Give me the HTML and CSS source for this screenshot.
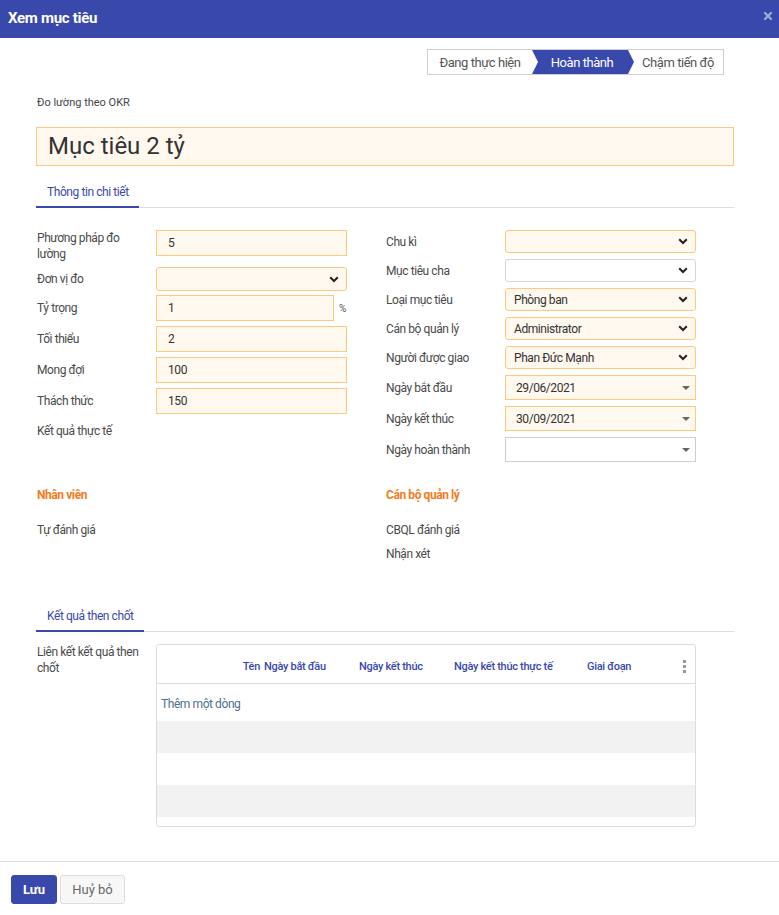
FILE: index.html
```html
<!DOCTYPE html>
<html lang="vi">
<head>
<meta charset="utf-8">
<title>Xem mục tiêu</title>
<link rel="stylesheet" href="styles.css">
</head>
<body>
<div class="modal">
  <header class="mhead">
    <h4 class="mtitle">Xem mục tiêu</h4>
    <span class="close"><svg width="8" height="8" viewBox="0 0 8 8"><path d="M1 1L7 7M7 1L1 7" stroke="#a3aad8" stroke-width="2.2" stroke-linecap="square"/></svg></span>
  </header>
  <main class="mbody">
    <div class="statusrow">
      <div class="statusbar">
        <span class="st st1">Đang thực hiện</span>
        <span class="st st2 active">Hoàn thành</span>
        <span class="st st3">Chậm tiến độ</span>
      </div>
    </div>
    <div class="okr">Đo lường theo OKR</div>
    <div class="titlebox">Mục tiêu 2 tỷ</div>
    <nav class="tabs"><span class="tab">Thông tin chi tiết</span></nav>

    <div class="cols">
      <div class="col left">
        <div class="row top"><div class="lbl">Phương pháp đo lường</div><div class="fld"><div class="inp">5</div></div></div>
        <div class="row r-sel"><div class="lbl">Đơn vị đo</div><div class="fld"><div class="sel req"><span></span><svg class="chev" width="10" height="7" viewBox="0 0 10 7"><path d="M1.2 1.2L5 5L8.8 1.2" fill="none" stroke="#222" stroke-width="2"/></svg></div></div></div>
        <div class="row"><div class="lbl">Tỷ trọng</div><div class="fld pct"><div class="inp">1</div><span class="unit">%</span></div></div>
        <div class="row"><div class="lbl">Tối thiểu</div><div class="fld"><div class="inp">2</div></div></div>
        <div class="row"><div class="lbl">Mong đợi</div><div class="fld"><div class="inp">100</div></div></div>
        <div class="row"><div class="lbl">Thách thức</div><div class="fld"><div class="inp">150</div></div></div>
        <div class="row r-text"><div class="lbl">Kết quả thực tế</div><div class="fld"></div></div>
      </div>
      <div class="col right">
        <div class="row rs"><div class="lbl">Chu kì</div><div class="fld"><div class="sel req"><span></span><svg class="chev" width="10" height="7" viewBox="0 0 10 7"><path d="M1.2 1.2L5 5L8.8 1.2" fill="none" stroke="#222" stroke-width="2"/></svg></div></div></div>
        <div class="row rs"><div class="lbl">Mục tiêu cha</div><div class="fld"><div class="sel"><span></span><svg class="chev" width="10" height="7" viewBox="0 0 10 7"><path d="M1.2 1.2L5 5L8.8 1.2" fill="none" stroke="#222" stroke-width="2"/></svg></div></div></div>
        <div class="row rs"><div class="lbl">Loại mục tiêu</div><div class="fld"><div class="sel req"><span>Phòng ban</span><svg class="chev" width="10" height="7" viewBox="0 0 10 7"><path d="M1.2 1.2L5 5L8.8 1.2" fill="none" stroke="#222" stroke-width="2"/></svg></div></div></div>
        <div class="row rs"><div class="lbl">Cán bộ quản lý</div><div class="fld"><div class="sel req"><span>Administrator</span><svg class="chev" width="10" height="7" viewBox="0 0 10 7"><path d="M1.2 1.2L5 5L8.8 1.2" fill="none" stroke="#222" stroke-width="2"/></svg></div></div></div>
        <div class="row rs"><div class="lbl">Người được giao</div><div class="fld"><div class="sel req"><span>Phan Đức Mạnh</span><svg class="chev" width="10" height="7" viewBox="0 0 10 7"><path d="M1.2 1.2L5 5L8.8 1.2" fill="none" stroke="#222" stroke-width="2"/></svg></div></div></div>
        <div class="row rd"><div class="lbl">Ngày bắt đầu</div><div class="fld"><div class="date req"><span>29/06/2021</span><svg class="caret" width="8" height="4" viewBox="0 0 8 4"><path d="M0 0H8L4 4Z" fill="#666"/></svg></div></div></div>
        <div class="row rd"><div class="lbl">Ngày kết thúc</div><div class="fld"><div class="date req"><span>30/09/2021</span><svg class="caret" width="8" height="4" viewBox="0 0 8 4"><path d="M0 0H8L4 4Z" fill="#666"/></svg></div></div></div>
        <div class="row rd"><div class="lbl">Ngày hoàn thành</div><div class="fld"><div class="date"><span></span><svg class="caret" width="8" height="4" viewBox="0 0 8 4"><path d="M0 0H8L4 4Z" fill="#666"/></svg></div></div></div>
      </div>
    </div>

    <div class="cols eval">
      <div class="col">
        <div class="sect">Nhân viên</div>
        <div class="plain">Tự đánh giá</div>
      </div>
      <div class="col">
        <div class="sect">Cán bộ quản lý</div>
        <div class="plain">CBQL đánh giá</div>
        <div class="plain">Nhận xét</div>
      </div>
    </div>

    <nav class="tabs tabs2"><span class="tab">Kết quả then chốt</span></nav>

    <div class="krow">
      <div class="lbl">Liên kết kết quả then chốt</div>
      <div class="tbl">
        <div class="thead">
          <span class="th th-name">Tên</span>
          <span class="th">Ngày bắt đầu</span>
          <span class="th">Ngày kết thúc</span>
          <span class="th">Ngày kết thúc thực tế</span>
          <span class="th">Giai đoạn</span>
          <span class="th th-opt"><svg width="3" height="13" viewBox="0 0 3 13"><rect x="0" y="0" width="3" height="3" fill="#999"/><rect x="0" y="5" width="3" height="3" fill="#999"/><rect x="0" y="10" width="3" height="3" fill="#999"/></svg></span>
        </div>
        <div class="addrow">Thêm một dòng</div>
        <div class="trow grey"></div>
        <div class="trow"></div>
        <div class="trow grey"></div>
        <div class="tend"></div>
      </div>
    </div>
  </main>
  <footer class="mfoot">
    <button class="btn primary">Lưu</button>
    <button class="btn secondary">Huỷ bỏ</button>
  </footer>
</div>
</body>
</html>
```

FILE: styles.css
```css
* { box-sizing: border-box; }
html, body { margin: 0; padding: 0; background: #fff; }
body {
  font-family: Roboto, "Noto Sans", "Liberation Sans", sans-serif;
  font-size: 12px;
  letter-spacing: -0.42px;
  color: #4a4a4a;
}
.modal { width: 779px; }

.mhead {
  height: 38px;
  background: #3949ab;
  display: flex;
  align-items: center;
  justify-content: space-between;
  padding: 0 8px 2px 8px;
}
.mtitle {
  margin: 0;
  font-size: 15px;
  font-weight: 700;
  color: #fff;
  letter-spacing: -0.3px;
}
.close { display: flex; margin-right: -1px; margin-top: -4px; }

.mbody { padding: 0 45px 0 36px; }

.statusrow {
  display: flex;
  justify-content: flex-end;
  padding-top: 11px;
  padding-right: 10px;
}
.statusbar {
  display: flex;
  border: 1px solid #cfcfcf;
  height: 26px;
}
.st {
  position: relative;
  display: flex;
  align-items: center;
  justify-content: center;
  height: 24px;
  font-size: 13px;
  letter-spacing: -0.45px;
  color: #555;
}
.st1 { width: 104px; }
.st2 { width: 96px; padding-left: 4px; }
.st3 { width: 95px; padding-left: 5px; }
.st.active { background: #3949ab; color: #fff; }
.st.active::before {
  content: "";
  position: absolute;
  left: 0; top: 0;
  border-left: 6px solid #fff;
  border-top: 12px solid transparent;
  border-bottom: 12px solid transparent;
}
.st.active::after {
  content: "";
  position: absolute;
  right: -6px; top: 0;
  border-left: 6px solid #3949ab;
  border-top: 12px solid transparent;
  border-bottom: 12px solid transparent;
  z-index: 1;
}

.okr {
  margin-top: 21px;
  font-size: 11px;
  letter-spacing: 0;
  line-height: 14px;
  color: #444;
  padding-left: 1px;
}
.titlebox {
  margin-top: 17px;
  height: 39px;
  border: 1px solid #fcc97f;
  background: #fff8ee;
  font-size: 24px;
  letter-spacing: 0;
  color: #333;
  padding-left: 11px;
  line-height: 37px;
}

.tabs {
  margin-top: 18px;
  border-bottom: 1px solid #dcdcdc;
  display: flex;
}
.tab {
  font-size: 12px;
  line-height: 16px;
  color: #3949ab;
  padding: 0 10px 6px 11px;
  border-bottom: 2px solid #3949ab;
  margin-bottom: -1px;
}

.cols {
  display: grid;
  grid-template-columns: 310px 310px;
  column-gap: 39px;
  margin-left: 1px;
  margin-top: 22px;
}
.row {
  display: flex;
  align-items: center;
  margin-bottom: 5px;
}
.row.top { align-items: flex-start; margin-bottom: 5px; }
.row.r-sel { margin-bottom: 4px; }
.row.rs, .row.rd { margin-bottom: 6px; }
.lbl {
  width: 119px;
  flex: none;
  padding-right: 8px;
  line-height: 16px;
  color: #4a4a4a;
  font-size: 12px;
}
.fld { width: 191px; display: flex; align-items: center; }
.inp {
  flex: 1;
  height: 26px;
  border: 1px solid #fcc97f;
  background: #fff8ee;
  padding-left: 11px;
  line-height: 24px;
  color: #333;
}
.pct .unit {
  width: 13px;
  padding-left: 5px;
  font-size: 10px;
  color: #555;
}
.sel {
  flex: 1;
  height: 24px;
  border: 1px solid #d6d6d6;
  border-radius: 3px;
  background: #fff;
  display: flex;
  align-items: center;
  justify-content: space-between;
  padding: 0 7px 0 8px;
  color: #333;
}
.rs .sel { height: 23px; }
.sel.req, .date.req { border-color: #fcc97f; background: #fff8ee; }
.chev { flex: none; }
.date {
  flex: 1;
  height: 25px;
  border: 1px solid #cdcdcd;
  background: #fff;
  display: flex;
  align-items: center;
  justify-content: space-between;
  padding: 0 5px 0 10px;
  color: #333;
}
.caret { flex: none; }
.r-text { height: 24px; margin-top: 0; }

.eval { margin-top: 19px; }
.sect {
  color: #f47c20;
  font-weight: 700;
  line-height: 16px;
  margin-bottom: 19px;
}
.plain { line-height: 16px; margin-bottom: 8px; }

.tabs2 { margin-top: 38px; }

.krow {
  display: flex;
  align-items: flex-start;
  margin-top: 12px;
  margin-left: 1px;
}
.tbl {
  width: 540px;
  border: 1px solid #dcdcdc;
  border-radius: 3px;
  overflow: hidden;
}
.thead {
  display: grid;
  grid-template-columns: 104px 95px 95px 133px 1fr 22px;
  height: 39px;
  border-bottom: 1px solid #dcdcdc;
  align-items: start;
  padding-top: 14px;
}
.th {
  font-size: 11px;
  font-weight: 500;
  letter-spacing: -0.3px;
  color: #3949ab;
  line-height: 16px;
  padding-left: 3px;
}
.th-name { text-align: right; padding-right: 1px; padding-left: 0; }
.th-opt { padding-left: 10px; padding-top: 1px; display: flex; }
.addrow {
  height: 37px;
  padding: 12px 0 0 4px;
  line-height: 16px;
  color: #4d6f94;
}
.trow { height: 32px; }
.trow.grey { background: #f2f2f2; }
.tend { height: 9px; }

.mfoot {
  margin-top: 34px;
  border-top: 1px solid #dcdcdc;
  padding: 13px 11px 12px;
  display: flex;
  gap: 3px;
}
.btn {
  height: 29px;
  border-radius: 3px;
  font-family: Roboto, "Noto Sans", "Liberation Sans", sans-serif;
  font-size: 13px;
  cursor: pointer;
}
.btn.primary {
  width: 46px;
  background: #3949ab;
  border: 1px solid #3949ab;
  color: #fff;
  font-weight: 700;
}
.btn.secondary {
  width: 65px;
  background: #f7f7f7;
  border: 1px solid #dddddd;
  color: #666;
}
```
